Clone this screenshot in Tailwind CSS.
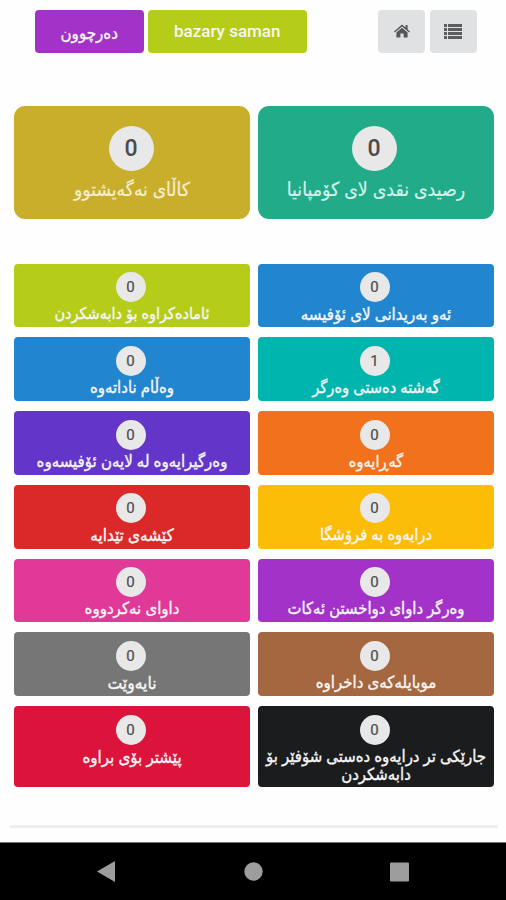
<!DOCTYPE html>
<html lang="ckb"><head><meta charset="utf-8"><meta name="viewport" content="width=device-width, initial-scale=1"><title>bazary saman</title><script src="https://cdn.jsdelivr.net/npm/@tailwindcss/browser@4"></script></head>
<body class="flex h-[900px] w-[506px] flex-col overflow-hidden bg-[#fefefe] font-['Roboto','DejaVu_Sans_Condensed','DejaVu_Sans',sans-serif] text-[#f6f6f6]">
<header class="flex h-[105.5px] shrink-0 items-start pt-[9.5px] pl-[35px]">
  <button class="flex h-[43.5px] w-[108.5px] items-center justify-center rounded-[4px] bg-[#a333c8]"><span dir="rtl" class="mt-1 text-[16.8px] leading-5 [-webkit-text-stroke:0.3px]">دەرچوون</span></button>
  <button class="ml-[4.5px] flex h-[43.5px] w-[158.5px] items-center justify-center rounded-[4px] bg-[#b5cc18] text-[17px] font-medium">bazary saman</button>
  <button class="ml-[71.5px] flex h-[43.5px] w-[47px] items-center justify-center rounded-[4px] bg-[#e0e1e2]" aria-label="Home"><svg class="h-[14px] w-[16px]" viewBox="0 0 16 14" fill="#555657"><path d="M8 .5 11.6 3.6V1h2v4.4L16 7.5l-.9 1L8 2.5.9 8.500 0 7.500Z"/><path d="M8 3.700 13.600 8.400V13.500H9.600V9.500H6.400V13.500H2.400V8.400Z"/></svg></button>
  <button class="ml-[4.5px] flex h-[43.5px] w-[47px] items-center justify-center rounded-[4px] bg-[#e0e1e2]" aria-label="List"><svg class="h-[15px] w-[18px]" viewBox="0 0 18 15" fill="#5c5d5e"><path d="M0 0h3v3H0zM4 0h14v3H4zM0 4h3v3H0zM4 4h14v3H4zM0 8h3v3H0zM4 8h14v3H4zM0 12h3v3H0zM4 12h14v3H4z"/></svg></button>
</header>
<main class="flex flex-col">
<section class="grid grid-cols-2 gap-2 pr-3 pl-[14px] [&_span]:[-webkit-text-stroke:0.2px]">
  <div class="flex h-[113px] flex-col items-center rounded-[11px] bg-[#c8ae2a] pt-5"><b class="mr-[2px] flex size-[45px] items-center justify-center rounded-full bg-[#e8e8e8] pt-[2px] text-[23px] font-medium text-[#4b4b4b]">0</b><span dir="rtl" class="mt-[6px] text-[19.1px] leading-[26px] text-[#f5efd3]">کاڵای نەگەیشتوو</span></div>
  <div class="flex h-[113px] flex-col items-center rounded-[11px] bg-[#21ab89] pt-5"><b class="mr-[4px] flex size-[45px] items-center justify-center rounded-full bg-[#e8e8e8] pt-[2px] text-[23px] font-medium text-[#4b4b4b]">0</b><span dir="rtl" class="mt-[6px] text-[19.4px] leading-[26px] text-[#d5f1eb]">رصیدی نقدی لای کۆمپانیا</span></div>
</section>
<section class="mt-[45px] grid grid-cols-2 grid-rows-[63.8px_63.8px_63.8px_63.8px_63.8px_63.8px_80.8px] gap-x-2 gap-y-[10px] pr-3 pl-[14px] text-center leading-[18px] *:flex *:flex-col *:items-center *:rounded-[4px] *:pt-[8.5px] [&_b]:mr-[3px] [&_b]:flex [&_b]:size-[30px] [&_b]:shrink-0 [&_b]:items-center [&_b]:justify-center [&_b]:rounded-full [&_b]:bg-[#e8e8e8] [&_b]:text-[15px] [&_b]:font-normal [&_b]:text-[#4b4b4b] [&_b]:[-webkit-text-stroke:0.2px] [&_span]:mt-[3px] [&_span]:[-webkit-text-stroke:0.35px]">
  <div class="bg-[#b5cc18]"><b>0</b><span dir="rtl" class="text-[16.1px]">ئامادەکراوە بۆ دابەشکردن</span></div>
  <div class="bg-[#2185d0]"><b>0</b><span dir="rtl" class="text-[16.8px]">ئەو بەریدانی لای ئۆفیسە</span></div>
  <div class="bg-[#2185d0]"><b>0</b><span dir="rtl" class="text-[16.6px]">وەڵام ناداتەوە</span></div>
  <div class="bg-[#00b5ad]"><b>1</b><span dir="rtl" class="text-[16.3px]">گەشتە دەستی وەرگر</span></div>
  <div class="bg-[#6435c9]"><b>0</b><span dir="rtl" class="text-[16.7px]">وەرگیرایەوە لە لایەن ئۆفیسەوە</span></div>
  <div class="bg-[#f2711c]"><b>0</b><span dir="rtl" class="text-[16.3px]">گەڕایەوە</span></div>
  <div class="bg-[#db2828]"><b>0</b><span dir="rtl" class="text-[17px]">کێشەی تێدایە</span></div>
  <div class="bg-[#fbbd08]"><b>0</b><span dir="rtl" class="text-[16.4px]">درایەوە بە فرۆشگا</span></div>
  <div class="bg-[#e03997]"><b>0</b><span dir="rtl" class="text-[16.7px]">داوای نەکردووە</span></div>
  <div class="bg-[#a333c8]"><b>0</b><span dir="rtl" class="text-[16.5px]">وەرگر داوای دواخستن ئەکات</span></div>
  <div class="bg-[#767676]"><b>0</b><span dir="rtl" class="text-[17.4px]">نایەوێت</span></div>
  <div class="bg-[#a5673f]"><b>0</b><span dir="rtl" class="text-[16.7px]">موبایلەکەی داخراوە</span></div>
  <div class="bg-[#dc143c]"><b>0</b><span dir="rtl" class="text-[16.8px]">پێشتر بۆی براوە</span></div>
  <div class="bg-[#1b1c1d]"><b>0</b><span dir="rtl" class="text-[16.6px] whitespace-nowrap">جارێکی تر درایەوە دەستی شۆفێر بۆ<br>دابەشکردن</span></div>
</section>
<hr class="mt-[37.5px] mr-2 ml-[10px] h-[3px] border-0 bg-[#eeeeee]">
</main>
<nav class="mt-auto h-[58.5px] shrink-0 border-t border-[#777] bg-black">
  <svg class="h-[57px] w-[506px]" viewBox="0 0 506 57" fill="#9d9d9d"><path d="M97 28.500 115 18V39z"/><circle cx="253.500" cy="28.500" r="9.200"/><rect x="390" y="19.500" width="19" height="19" rx="1"/></svg>
</nav>
</body></html>
